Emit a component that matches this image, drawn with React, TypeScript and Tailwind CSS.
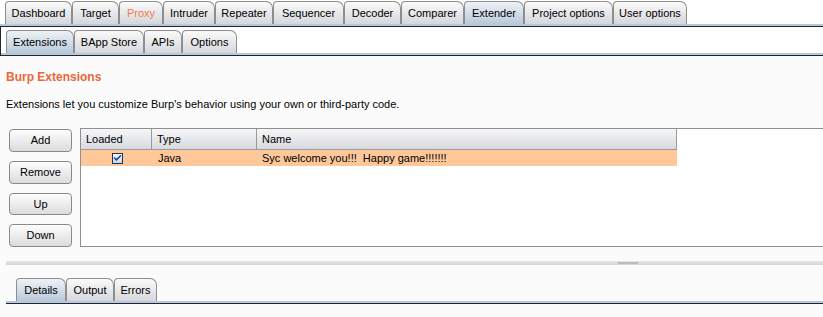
import { Check } from 'lucide-react'

const topTabs = [
  { label: 'Dashboard', w: 'w-[67px]' },
  { label: 'Target', w: 'w-[47px]' },
  { label: 'Proxy', w: 'w-[44px]', alert: true },
  { label: 'Intruder', w: 'w-[52px]' },
  { label: 'Repeater', w: 'w-[58px]' },
  { label: 'Sequencer', w: 'w-[71px]' },
  { label: 'Decoder', w: 'w-[57px]' },
  { label: 'Comparer', w: 'w-[63px]' },
  { label: 'Extender', w: 'w-[60px]', active: true },
  { label: 'Project options', w: 'w-[89px]' },
  { label: 'User options', w: 'w-[74px]' },
]

const subTabs = [
  { label: 'Extensions', w: 'w-[68px]', active: true },
  { label: 'BApp Store', w: 'w-[70px]' },
  { label: 'APIs', w: 'w-[38px]' },
  { label: 'Options', w: 'w-[55px]' },
]

const bottomTabs = [
  { label: 'Details', w: 'w-[50px]', active: true },
  { label: 'Output', w: 'w-[48px]' },
  { label: 'Errors', w: 'w-[43px]' },
]

type TabDef = { label: string; w: string; active?: boolean; alert?: boolean }

function Tab({ tab }: { tab: TabDef }) {
  return (
    <div
      className={`${tab.w} h-[23px] flex items-center justify-center border border-b-0 border-[#8e8e8e] rounded-tl-[4px] rounded-tr-[7px] text-[11px] ${
        tab.active
          ? 'bg-gradient-to-b from-[#eef2f6] to-[#b9c9da]'
          : 'bg-gradient-to-b from-[#fafafa] to-[#d6d7db]'
      } ${tab.alert ? 'text-[#ee7a48]' : 'text-black'}`}
    >
      {tab.label}
    </div>
  )
}

function TabRule() {
  return (
    <div>
      <div className="h-[2px] bg-[#b9c9da]" />
      <div className="h-px bg-[#1e2530]" />
    </div>
  )
}

function Button({ label }: { label: string }) {
  return (
    <div className="w-[63px] h-[23px] flex items-center justify-center rounded-[4px] border border-[#8a8a8a] bg-gradient-to-b from-[#fdfdfd] to-[#dcdcdc] text-[11px] text-black">
      {label}
    </div>
  )
}

export default function App() {
  return (
    <div className="w-[823px] h-[317px] overflow-hidden bg-[#fbfbfb] font-['Liberation_Sans',Arial,sans-serif] text-black">
      {/* Main tabs */}
      <div className="pt-px bg-white">
        <div className="flex pl-[5px]">
          {topTabs.map((t) => (
            <Tab key={t.label} tab={t} />
          ))}
        </div>
        <TabRule />
      </div>

      {/* Extender sub tabs */}
      <div className="border-l border-[#1e2530] bg-white">
        <div className="flex pl-[5px] pt-[3px]">
          {subTabs.map((t) => (
            <Tab key={t.label} tab={t} />
          ))}
        </div>
        <TabRule />
      </div>

      <div className="pl-[6px] pt-[14px]">
        <h2 className="text-[12px] font-bold text-[#e8683a] leading-[15px]">Burp Extensions</h2>
        <p className="mt-[12px] text-[11px] leading-[14px]">
          Extensions let you customize Burp's behavior using your own or third-party code.
        </p>
      </div>

      <div className="flex mt-[17px] h-[119px]">
        <div className="flex flex-col gap-[9px] pl-[9px] pt-px w-[80px]">
          <Button label="Add" />
          <Button label="Remove" />
          <Button label="Up" />
          <Button label="Down" />
        </div>

        {/* extensions table */}
        <div className="flex-1 border border-r-0 border-[#8f8f8f] bg-white">
          <div className="w-[596px]">
            <div className="flex h-[21px] border-b border-r border-[#9a9a9a] bg-gradient-to-b from-[#f6f6f8] to-[#d8dadf] text-[11px]">
              <div className="w-[71px] pl-[5px] flex items-center border-r border-[#9a9a9a]">Loaded</div>
              <div className="w-[105px] pl-[5px] flex items-center border-r border-[#9a9a9a]">Type</div>
              <div className="flex-1 pl-[5px] flex items-center">Name</div>
            </div>
            <div className="flex h-[16px] bg-[#ffc89a] text-[11px] items-center">
              <div className="w-[71px] flex justify-center">
                <div className="w-[11px] h-[11px] ml-[2px] border border-[#1f3350] bg-gradient-to-b from-[#f4f8ff] to-[#c8d6ea] flex items-center justify-center">
                  <Check size={10} strokeWidth={4} className="text-[#1a3fa0]" />
                </div>
              </div>
              <div className="w-[105px] pl-[6px]">Java</div>
              <div className="flex-1 pl-[5px] whitespace-pre">Syc welcome you!!!  Happy game!!!!!!!</div>
            </div>
          </div>
        </div>
      </div>

      {/* splitter */}
      <div className="ml-[6px] mt-[14px] h-[4px] bg-gradient-to-b from-[#e6e6e6] to-[#d4d4d4] relative">
        <div className="absolute left-[612px] top-px w-[20px] h-[2px] bg-[#bdbdbd]" />
      </div>

      {/* bottom tabs */}
      <div className="pl-[6px] mt-[13px]">
        <div className="flex pl-[10px]">
          {bottomTabs.map((t) => (
            <Tab key={t.label} tab={t} />
          ))}
        </div>
        <TabRule />
      </div>
    </div>
  )
}
